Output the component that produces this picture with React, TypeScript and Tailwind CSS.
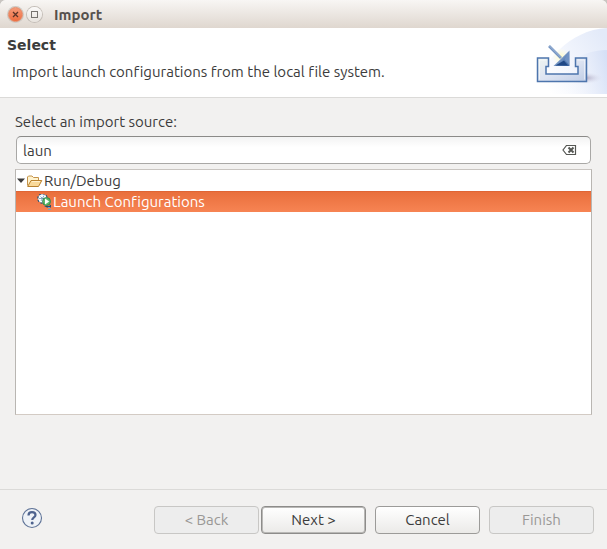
import React, { useState } from "react";

function ImportBanner() {
  return (
    <svg width="76" height="66" viewBox="0 0 76 66" aria-hidden="true" className="shrink-0">
      <defs>
        <linearGradient id="swoosh" x1="0" x2="1" y1="0.8" y2="0.2">
          <stop offset="0.1" stopColor="#ffffff" />
          <stop offset="0.5" stopColor="#f3f6fd" />
          <stop offset="1" stopColor="#e3eaf9" />
        </linearGradient>
        <linearGradient id="swooshInner" x1="0" x2="1" y1="0.4" y2="0.2">
          <stop offset="0" stopColor="#ffffff" stopOpacity="0" />
          <stop offset="1" stopColor="#d6e0f6" />
        </linearGradient>
        <linearGradient id="tray" x1="0" x2="1" y1="0" y2="1">
          <stop offset="0" stopColor="#eef4f0" />
          <stop offset="0.5" stopColor="#dde4f2" />
          <stop offset="1" stopColor="#c0cde6" />
        </linearGradient>
        <linearGradient id="head" x1="0" x2="1" y1="0" y2="1">
          <stop offset="0.2" stopColor="#b4c8e2" />
          <stop offset="0.6" stopColor="#6488bb" />
          <stop offset="1" stopColor="#3c66a3" />
        </linearGradient>
        <radialGradient id="glow">
          <stop offset="0" stopColor="#fffbc4" />
          <stop offset="1" stopColor="#fffde8" stopOpacity="0.2" />
        </radialGradient>
        <radialGradient id="shade">
          <stop offset="0" stopColor="#aaa5bf" />
          <stop offset="1" stopColor="#e3e6f4" stopOpacity="0" />
        </radialGradient>
      </defs>
      <path d="M0 66C12 34 38 2 76 0V66Z" fill="url(#swoosh)" />
      <path d="M20 66C26 42 46 22 76 22V66Z" fill="url(#swooshInner)" />
      <ellipse cx="54" cy="50" rx="18" ry="6" fill="url(#shade)" />
      <circle cx="30" cy="29" r="8" fill="url(#glow)" />
      <path
        d="M6.500 30H17.500V38.500H15V46H47V38.500H44.500V30H55.500V53.500H6.500Z"
        fill="url(#tray)"
        stroke="#4d75ad"
        strokeWidth="1.500"
      />
      <path d="M8.500 51.500V32H15.500M46.500 32H53.500V51.500" fill="none" stroke="#ffffff" strokeOpacity="0.500" />
      <path d="M18 18L30 30" stroke="#7393c1" strokeWidth="2.600" />
      <path d="M18.500 18L30 29.500" stroke="#a5bcdc" strokeWidth="1" />
      <path d="M38.500 22.500V38H22.500Z" fill="url(#head)" />
      <path d="M37 37.500H24.500L33 32.500Z" fill="#1f4785" />
      <path d="M38 24V37L33.500 31Z" fill="#7193c4" />
    </svg>
  );
}

function FolderIcon() {
  return (
    <svg width="16" height="16" viewBox="0 0 16 16" aria-hidden="true">
      <path d="M0.500 12.500V4L1.500 3H5L6.500 4.500H11.500V7" fill="#fff3cf" stroke="#c4934a" />
      <path d="M0.700 13.500L4 7.500H14.800L11.500 13.500Z" fill="#f9d999" stroke="#b9822f" strokeLinejoin="round" />
      <path d="M5 8.500H13" stroke="#fff0cc" />
    </svg>
  );
}

function LaunchIcon() {
  return (
    <svg width="16" height="16" viewBox="0 0 16 16" aria-hidden="true">
      <circle cx="5.500" cy="4.500" r="4.300" fill="#f8fcff" stroke="#2c5675" strokeWidth="2" strokeDasharray="2 1.300" />
      <circle cx="5.500" cy="4.500" r="4" fill="#f8fcff" />
      <path d="M3.500 2.500L7.500 6.500M7 1.500L4 7M2 4.500H8" stroke="#6b93ae" strokeWidth="0.800" />
      <circle cx="9.500" cy="7.500" r="4" fill="#5cb868" stroke="#237a49" strokeWidth="0.800" />
      <path d="M8 4.500V10.500L12.200 7.500Z" fill="#ffffff" />
      <path d="M7 12L10 13.500H14V10.500L12 12Z" fill="#284e70" />
      <path d="M11 13.500H13M11 15.500H14" stroke="#6ba7c4" />
    </svg>
  );
}

const button =
  "h-7 min-w-0 w-[105px] shrink rounded-[4px] border text-center leading-5";
const enabled =
  "border-[#9c9b99] bg-linear-to-b from-white to-[#ebeae8] text-[#3c3c3c]";
const disabled = "border-[#c8c7c5] bg-[#ededed] text-[#9a9896]";

export default function App() {
  const [query, setQuery] = useState("laun");
  return (
    <div className="bg-[#c9c5c1] font-['Ubuntu','Noto_Sans',sans-serif] text-[15px] text-[#3c3c3c] [font-variant-ligatures:none]">
      <main className="flex min-h-screen flex-col overflow-hidden rounded-t-md bg-[#f2f1f0]">
        <header className="flex h-7 items-center gap-1 bg-linear-to-b from-[#f8f6f4] to-[#dfd7cf] pl-2">
          <button
            aria-label="Close"
            className="flex size-[15px] items-center justify-center rounded-full border border-[#e08a69] bg-linear-to-b from-[#f59a78] to-[#ef6c3d] ring-1 ring-[#cdc8c2]"
          >
            <svg width="7" height="7" viewBox="0 0 7 7" aria-hidden="true">
              <path d="M1 1L6 6M6 1L1 6" stroke="#5c3327" strokeWidth="1.300" />
            </svg>
          </button>
          <button
            aria-label="Maximize"
            className="flex size-[15px] items-center justify-center rounded-full bg-linear-to-b from-[#fbfaf9] to-[#e8e3de] ring-1 ring-[#c4beb8]"
          >
            <span className="size-[7px] border border-[#77736f]" />
          </button>
          <h1 className="ml-2 pt-0.5 font-bold leading-5 text-[#55504c]">Import</h1>
        </header>

        <section className="flex h-[70px] items-start justify-between border-b border-[#dbdad8] bg-white">
          <div className="pl-[7px] pt-[7px]">
            <h2 className="font-['DejaVu_Sans',sans-serif] text-sm font-bold leading-5">Select</h2>
            <p className="mt-[7px] pl-[5px] leading-5">
              Import launch configurations from the local file system.
            </p>
          </div>
          <ImportBanner />
        </section>

        <section className="flex flex-1 flex-col px-[15px] pt-[14px]">
          <label htmlFor="source" className="leading-5">
            Select an import source:
          </label>
          <div className="mx-px mt-1 flex h-7 items-center rounded-[5px] border border-[#a9a8a6] border-t-[#8b8a88] bg-linear-to-b from-[#f3f3f3] to-white to-40% pl-1.5 pr-[13px]">
            <input
              id="source"
              value={query}
              onChange={(e) => setQuery(e.target.value)}
              className="h-6 min-w-0 flex-1 bg-transparent leading-5 outline-none"
            />
            <button aria-label="Clear" onClick={() => setQuery("")}>
              <svg width="15" height="11" viewBox="0 0 15 11" aria-hidden="true">
                <path d="M4.500 0.500H13.500V9.500H4.500L1 5Z" fill="none" stroke="#555753" strokeWidth="1.200" />
                <path d="M6.500 2.500L11.500 7.500M11.500 2.500L6.500 7.500" stroke="#555753" strokeWidth="2" />
              </svg>
            </button>
          </div>
          <ul
            role="tree"
            aria-label="Import sources"
            className="mt-[5px] h-[246px] border border-[#b9b6b2] border-b-[#d3cbc4] border-t-[#c9c5c1] bg-white"
          >
            <li role="treeitem" aria-expanded="true">
              <div className="flex h-[21px] items-center">
                <svg width="11" height="6" viewBox="0 0 11 6" aria-hidden="true">
                  <path d="M1 0.500H9L5 5Z" fill="#3c3c3c" />
                </svg>
                <FolderIcon />
                <span className="ml-px leading-5">Run/Debug</span>
              </div>
              <ul role="group">
                <li
                  role="treeitem"
                  aria-selected="true"
                  className="flex h-[21px] items-center border-t border-[#df6535] bg-linear-to-b from-[#e96f3c] to-[#f78453] pl-[21px] text-white"
                >
                  <LaunchIcon />
                  <span className="leading-5">Launch Configurations</span>
                </li>
              </ul>
            </li>
          </ul>
        </section>

        <footer className="flex h-[60px] items-center border-t border-[#dbdad8] pl-[21px] pr-[13px]">
          <button aria-label="Help" className="mr-auto pb-1">
            <svg width="22" height="22" viewBox="0 0 22 22" aria-hidden="true">
              <circle cx="11" cy="11" r="9.500" fill="#eef2f7" stroke="#5f7397" strokeWidth="1.100" />
              <path
                d="M7.500 8.500C7.500 6 9 5.200 11 5.200C13.200 5.200 14.500 6.300 14.500 8C14.500 10.500 11.200 10.300 11.200 13"
                fill="none"
                stroke="#4d628e"
                strokeWidth="2.200"
              />
              <circle cx="11.200" cy="16" r="1.500" fill="#4d628e" />
            </svg>
          </button>
          <button disabled className={`${button} ${disabled}`}>
            &lt; Back
          </button>
          <button
            className={`${button} ml-0.5 border-[#8d8c8a] bg-linear-to-b from-white to-[#ebeae8] text-[#3c3c3c] inset-ring-1 inset-ring-[#b9b8b6]`}
          >
            Next &gt;
          </button>
          <button className={`${button} ${enabled} ml-[9px]`}>Cancel</button>
          <button disabled className={`${button} ${disabled} ml-[9px]`}>
            Finish
          </button>
        </footer>
      </main>
    </div>
  );
}
